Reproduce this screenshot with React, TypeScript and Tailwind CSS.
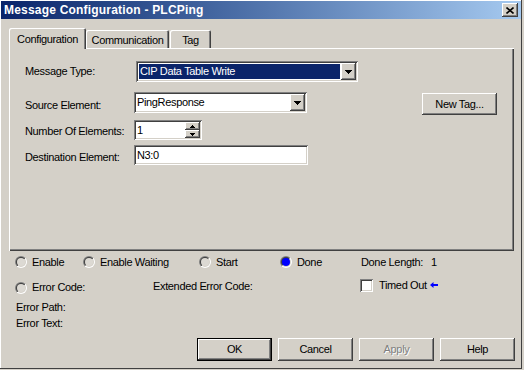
import React, { useId } from "react";

const raised =
  "shadow-[inset_-1px_-1px_#404040,inset_1px_1px_#ffffff,inset_-2px_-2px_#808080]";
const sunken =
  "shadow-[inset_1px_1px_#808080,inset_-1px_-1px_#ffffff,inset_2px_2px_#404040,inset_-2px_-2px_#d4d0c8]";

function DownArrow() {
  return (
    <svg width="7" height="4" viewBox="0 0 7 4" shapeRendering="crispEdges">
      <rect x="0" y="0" width="7" height="1" fill="#000" />
      <rect x="1" y="1" width="5" height="1" fill="#000" />
      <rect x="2" y="2" width="3" height="1" fill="#000" />
      <rect x="3" y="3" width="1" height="1" fill="#000" />
    </svg>
  );
}

function SmallArrow({ up }: { up?: boolean }) {
  return (
    <svg width="5" height="3" viewBox="0 0 5 3" shapeRendering="crispEdges">
      {up ? (
        <>
          <rect x="2" y="0" width="1" height="1" fill="#000" />
          <rect x="1" y="1" width="3" height="1" fill="#000" />
          <rect x="0" y="2" width="5" height="1" fill="#000" />
        </>
      ) : (
        <>
          <rect x="0" y="0" width="5" height="1" fill="#000" />
          <rect x="1" y="1" width="3" height="1" fill="#000" />
          <rect x="2" y="2" width="1" height="1" fill="#000" />
        </>
      )}
    </svg>
  );
}

function Radio({ checked }: { checked?: boolean }) {
  const id = useId().replace(/:/g, "");
  return (
    <svg width="12" height="12" viewBox="0 0 12 12" className="shrink-0">
      <defs>
        <linearGradient id={`o${id}`} x1="0" y1="0" x2="1" y2="1">
          <stop offset="0.5" stopColor="#808080" />
          <stop offset="0.5" stopColor="#ffffff" />
        </linearGradient>
        <linearGradient id={`i${id}`} x1="0" y1="0" x2="1" y2="1">
          <stop offset="0.5" stopColor="#404040" />
          <stop offset="0.5" stopColor="#d4d0c8" />
        </linearGradient>
      </defs>
      <circle cx="6" cy="6" r="6" fill={`url(#o${id})`} />
      <circle cx="6" cy="6" r="5" fill={`url(#i${id})`} />
      <circle cx="6" cy="6" r="4" fill={checked ? "#0000ff" : "#dcd9d3"} />
    </svg>
  );
}

function RadioItem({
  label,
  checked,
  w,
}: {
  label: string;
  checked?: boolean;
  w: string;
}) {
  return (
    <div className={`flex items-center ${w}`}>
      <Radio checked={checked} />
      <span className="ml-[5px]">{label}</span>
    </div>
  );
}

export default function App() {
  return (
    <div className="w-[524px] h-[370px] bg-[#d4d0c8] overflow-hidden font-['Liberation_Sans',Arial,sans-serif] text-[11px] leading-[13px] tracking-[-0.35px] text-black">
      <div className="w-[522px] h-[369px] p-[1px] flex flex-col shadow-[inset_-1px_-1px_#404040,inset_1px_1px_#ffffff]">
        {/* Title bar */}
        <div className="h-[18px] w-[520px] shrink-0 flex items-center justify-between pl-[3px] pr-[3px] bg-linear-to-r from-[#0a246a] to-[#a6caf0]">
          <span className="text-white font-bold text-[12px] tracking-[0.2px]">
            Message Configuration - PLCPing
          </span>
          <div
            className={`w-[16px] h-[14px] bg-[#d4d0c8] flex items-center justify-center ${raised}`}
          >
            <svg width="8" height="7" viewBox="0 0 8 7">
              <path d="M0.5 0.5 L7.5 6.5 M7.5 0.5 L0.5 6.5" stroke="#000" strokeWidth="1.6" />
            </svg>
          </div>
        </div>

        {/* Tabs */}
        <div className="mt-[9px] ml-[8px] h-[20px] flex items-end">
          <div className="relative z-10 h-[21px] w-[77px] -mb-px bg-[#d4d0c8] rounded-t-[2px] shadow-[inset_1px_1px_#ffffff,inset_-1px_0_#404040,inset_-2px_0_#808080] flex justify-center pt-[5px]">
            Configuration
          </div>
          <div className="h-[18px] w-[83px] rounded-t-[2px] shadow-[inset_1px_1px_#ffffff,inset_-1px_0_#404040,inset_-2px_0_#808080] flex justify-center pt-[4px]">
            Communication
          </div>
          <div className="h-[18px] w-[41px] ml-[1px] rounded-t-[2px] shadow-[inset_1px_1px_#ffffff,inset_-1px_0_#404040,inset_-2px_0_#808080] flex justify-center pt-[4px]">
            Tag
          </div>
        </div>

        {/* Panel */}
        <div className="ml-[8px] w-[505px] h-[203px] shrink-0 shadow-[inset_1px_1px_#ffffff,inset_-1px_-1px_#404040,inset_-2px_-2px_#808080] pl-[16px] pt-[13px] flex flex-col">
          {/* Row 1 */}
          <div className="flex items-center h-[21px]">
            <span className="w-[109px]">Message Type:</span>
            <div className={`ml-[2px] w-[222px] h-[21px] bg-white p-[3px] flex ${sunken}`}>
              <div className="flex-1 bg-[#0a246a] text-white pl-[1px] flex items-center">
                CIP Data Table Write
              </div>
              <div
                className={`w-[15px] h-[17px] -mt-px -mr-px ml-[1px] bg-[#d4d0c8] flex items-center justify-center ${raised}`}
              >
                <DownArrow />
              </div>
            </div>
          </div>

          {/* Row 2 */}
          <div className="mt-[10px] flex items-start h-[22px]">
            <span className="w-[109px] pt-[7px]">Source Element:</span>
            <div className={`w-[173px] h-[21px] bg-white p-[2px] flex ${sunken}`}>
              <div className="flex-1 pl-[1px] flex items-center">PingResponse</div>
              <div
                className={`w-[15px] h-[17px] bg-[#d4d0c8] flex items-center justify-center ${raised}`}
              >
                <DownArrow />
              </div>
            </div>
            <div
              className={`ml-[115px] mt-[1px] w-[75px] h-[22px] bg-[#d4d0c8] flex items-center justify-center ${raised}`}
            >
              New Tag...
            </div>
          </div>

          {/* Row 3 */}
          <div className="mt-[6px] flex items-center h-[20px]">
            <span className="w-[109px] pt-[2px]">Number Of Elements:</span>
            <div className={`w-[68px] h-[20px] bg-white p-[2px] flex ${sunken}`}>
              <div className="flex-1 pl-[1px] flex items-center">1</div>
              <div className="w-[15px] flex flex-col">
                <div
                  className={`h-[8px] bg-[#d4d0c8] flex items-center justify-center ${raised}`}
                >
                  <SmallArrow up />
                </div>
                <div
                  className={`h-[8px] bg-[#d4d0c8] flex items-center justify-center ${raised}`}
                >
                  <SmallArrow />
                </div>
              </div>
            </div>
          </div>

          {/* Row 4 */}
          <div className="mt-[5px] flex items-center h-[20px]">
            <span className="w-[109px] pt-[4px]">Destination Element:</span>
            <div className={`w-[174px] h-[20px] bg-white pl-[3px] flex items-center ${sunken}`}>
              N3:0
            </div>
          </div>
        </div>

        {/* Status area */}
        <div className="pl-[14px] flex flex-col">
          <div className="h-[22px] flex items-center">
            <RadioItem label="Enable" w="w-[68px]" />
            <RadioItem label="Enable Waiting" w="w-[116px]" />
            <RadioItem label="Start" w="w-[81px]" />
            <RadioItem label="Done" checked w="w-[81px]" />
            <span className="w-[70px]">Done Length:</span>
            <span>1</span>
          </div>
          <div className="h-[26px] flex items-center">
            <div className="w-[138px] flex items-center pt-[3px]">
              <Radio />
              <span className="ml-[5px]">Error Code:</span>
            </div>
            <span className="w-[207px]">Extended Error Code:</span>
            <div className="flex items-center -mt-[2px]">
              <div className={`w-[13px] h-[13px] bg-white ${sunken}`} />
              <span className="ml-[6px]">Timed Out</span>
              <svg width="8" height="6" viewBox="0 0 8 6" className="ml-[3px]">
                <path d="M0 3 L3.5 0 L3.5 2 L8 2 L8 4 L3.5 4 L3.5 6 Z" fill="#0000ff" />
              </svg>
            </div>
          </div>
          <div className="h-[16px] flex items-center pl-[1px]">Error Path:</div>
          <div className="h-[16px] flex items-center pl-[1px]">Error Text:</div>
        </div>

        {/* Buttons */}
        <div className="mt-[7px] flex justify-end gap-[6px] pr-[6px]">
          <div
            className={`w-[75px] h-[23px] border border-black bg-[#d4d0c8] flex items-center justify-center ${raised}`}
          >
            OK
          </div>
          <div
            className={`w-[75px] h-[23px] bg-[#d4d0c8] flex items-center justify-center ${raised}`}
          >
            Cancel
          </div>
          <div
            className={`w-[75px] h-[23px] bg-[#d4d0c8] flex items-center justify-center text-[#808080] [text-shadow:1px_1px_0_#ffffff] ${raised}`}
          >
            Apply
          </div>
          <div
            className={`w-[75px] h-[23px] bg-[#d4d0c8] flex items-center justify-center ${raised}`}
          >
            Help
          </div>
        </div>
      </div>
    </div>
  );
}
